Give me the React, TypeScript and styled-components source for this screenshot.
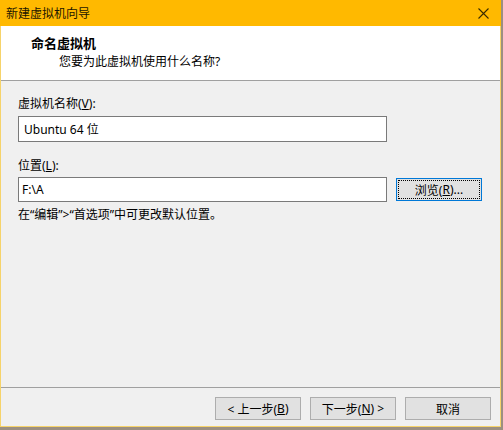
import styled, { createGlobalStyle } from 'styled-components';

const GlobalStyle = createGlobalStyle`
  html, body {
    margin: 0;
    padding: 0;
    background: #9c8f80;
  }
  body {
    font-family: "Noto Sans", "Noto Sans CJK SC", sans-serif;
    font-size: 12px;
    color: #000;
  }
`;

const App = () => {
  return (
    <>
      <GlobalStyle />
      <Window>
        <TitleBar>
          <TitleText>新建虚拟机向导</TitleText>
          <CloseButton>
            <svg width="11" height="11" viewBox="0 0 11 11">
              <path d="M0.5 0.5 L10.5 10.5 M10.5 0.5 L0.5 10.5" stroke="#3a2c00" strokeWidth="1.1" />
            </svg>
          </CloseButton>
        </TitleBar>
        <Header>
          <HeaderTitle>命名虚拟机</HeaderTitle>
          <HeaderSub>您要为此虚拟机使用什么名称?</HeaderSub>
        </Header>
        <Body>
          <Label>
            虚拟机名称(<u>V</u>):
          </Label>
          <NameInput value="Ubuntu 64 位" readOnly />
          <Label $top={16}>
            位置(<u>L</u>):
          </Label>
          <PathRow>
            <PathInput value="F:\A" readOnly />
            <BrowseButton>
              <FocusRing>
                浏览(<u>R</u>)...
              </FocusRing>
            </BrowseButton>
          </PathRow>
          <Hint>在“编辑”&gt;“首选项”中可更改默认位置。</Hint>
        </Body>
        <Footer>
          <Button>
            &lt; 上一步(<u>B</u>)
          </Button>
          <Button>
            下一步(<u>N</u>) &gt;
          </Button>
          <Button>取消</Button>
        </Footer>
      </Window>
    </>
  );
};

export default App;

const Window = styled.div`
  width: 499px;
  height: 426px;
  display: flex;
  flex-direction: column;
  border: 1px solid #f6d36a;
  border-top: none;
  background: #f0f0f0;
`;

const TitleBar = styled.div`
  height: 26px;
  margin: 0 -1px;
  background: #ffb900;
  display: flex;
  align-items: center;
  justify-content: space-between;
  padding: 0 0 0 6px;
`;

const TitleText = styled.span`
  font-size: 12px;
  color: #1c1600;
`;

const CloseButton = styled.div`
  width: 40px;
  height: 26px;
  display: flex;
  align-items: center;
  justify-content: center;
  margin-right: -2px;
`;

const Header = styled.div`
  height: 55px;
  box-sizing: border-box;
  background: #fff;
  border-bottom: 1px solid #a0a0a0;
  padding: 8px 0 0 30px;
  display: flex;
  flex-direction: column;
`;

const HeaderTitle = styled.div`
  font-weight: bold;
  font-size: 13px;
  line-height: 18px;
`;

const HeaderSub = styled.div`
  padding-left: 28px;
  line-height: 18px;
  margin-top: 1px;
`;

const Body = styled.div`
  flex: 1;
  padding: 15px 0 0 17px;
  display: flex;
  flex-direction: column;
`;

const Label = styled.div<{ $top?: number }>`
  line-height: 16px;
  margin-top: ${(p) => p.$top ?? 0}px;
`;

const NameInput = styled.input`
  box-sizing: border-box;
  width: 369px;
  height: 26px;
  margin-top: 4px;
  border: 1px solid #7a7a7a;
  background: #fff;
  padding: 0 5px;
  font: inherit;
  font-size: 12px;
  outline: none;
`;

const PathRow = styled.div`
  display: flex;
  align-items: center;
  gap: 9px;
  margin-top: 3px;
`;

const PathInput = styled(NameInput)`
  height: 25px;
  margin-top: 0;
  padding: 0 3px;
`;

const Button = styled.div`
  box-sizing: border-box;
  width: 86px;
  height: 23px;
  background: #e1e1e1;
  border: 1px solid #adadad;
  display: flex;
  align-items: center;
  justify-content: center;
  font-size: 12px;
`;

const BrowseButton = styled(Button)`
  border: 1px solid #0078d7;
  padding: 1px;
`;

const FocusRing = styled.div`
  width: 100%;
  height: 100%;
  box-sizing: border-box;
  border: 1px dotted #000;
  display: flex;
  align-items: center;
  justify-content: center;
`;

const Hint = styled.div`
  line-height: 16px;
  margin-top: 5px;
`;

const Footer = styled.div`
  height: 39px;
  box-sizing: border-box;
  border-top: 1px solid #a0a0a0;
  padding: 9px 9px 0 0;
  display: flex;
  justify-content: flex-end;
  gap: 9px;
`;
